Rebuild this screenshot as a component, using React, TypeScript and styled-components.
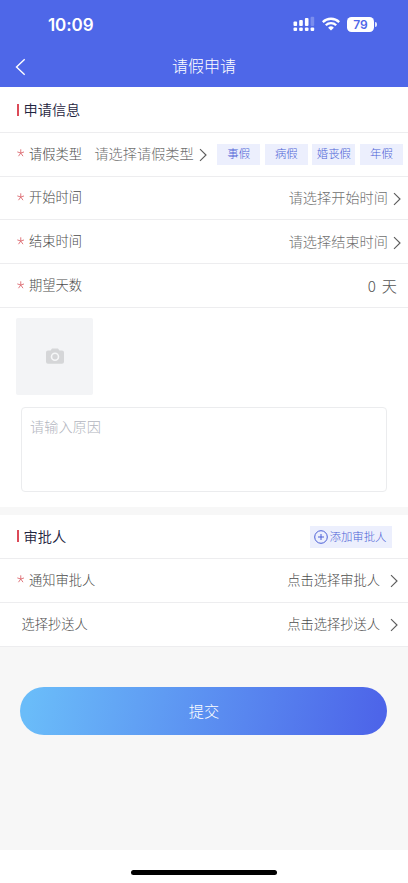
import React from "react";
import styled, { createGlobalStyle } from "styled-components";

const GlobalStyle = createGlobalStyle`
  * { box-sizing: border-box; }
  body {
    margin: 0;
    background: #fff;
    font-family: "Noto Sans CJK SC", "Noto Sans", sans-serif;
    font-weight: 300;
  }
`;

const Screen = styled.div`
  width: 408px;
  height: 883px;
  display: flex;
  flex-direction: column;
  background: #f7f7f7;
  overflow: hidden;
`;

const Header = styled.header`
  height: 87px;
  flex: none;
  background: #4e67e8;
  color: #fff;
`;

const StatusBar = styled.div`
  height: 48px;
  padding: 2px 31px 0 48px;
  display: flex;
  align-items: center;
  justify-content: space-between;
`;

const Clock = styled.span`
  font: 600 17px/20px Inter, sans-serif;
  letter-spacing: -0.1px;
`;

const StatusIcons = styled.div`
  display: flex;
  align-items: center;
  gap: 7px;
  margin-top: -2px;
`;

const NavBar = styled.div`
  height: 36px;
  display: grid;
  grid-template-columns: 60px 1fr 60px;
  align-items: center;
`;

const BackIcon = styled.svg`
  margin: 1px 0 0 15px;
`;

const NavTitle = styled.h1`
  margin: -2px 0 0;
  font-size: 16px;
  font-weight: 300;
  line-height: 24px;
  text-align: center;
`;

const Card = styled.section<{ $height: number; $top?: number }>`
  height: ${(p) => p.$height}px;
  margin-top: ${(p) => p.$top ?? 0}px;
  flex: none;
  background: #fff;
`;

const Row = styled.div<{ $height?: number; $right?: number; $left?: number }>`
  height: ${(p) => p.$height ?? 43.8}px;
  padding: 0 ${(p) => p.$right ?? 7}px 0 ${(p) => p.$left ?? 16}px;
  display: flex;
  align-items: center;
  border-bottom: 1px solid #ededef;
  white-space: nowrap;
`;

const SectionTitle = styled.h2<{ $lift?: number }>`
  margin: 0 auto ${(p) => p.$lift ?? 0}px 0;
  display: flex;
  align-items: center;
  gap: 5px;
  font-size: 14.2px;
  line-height: 20px;
  font-weight: 350;
  color: #1e2440;

  &::before {
    content: "";
    width: 2px;
    height: 12.5px;
    margin: 1px 0 0 0.5px;
    background: #dc4a58;
  }
`;

const StarIcon = styled.svg`
  flex: none;
  margin: 0 5px 2px 0.5px;
`;

const Label = styled.span`
  font-size: 13.25px;
  line-height: 20px;
  margin: 0 auto 1.4px 0;
  color: #4c4c4c;
`;

const Value = styled.span<{ $size?: number; $tone?: string; $gap?: number; $lift?: number }>`
  font-size: ${(p) => p.$size ?? 14.2}px;
  line-height: 20px;
  color: ${(p) => p.$tone ?? "#707070"};
  margin: 0 ${(p) => p.$gap ?? 5}px ${(p) => p.$lift ?? 2}px 0;
  word-spacing: 2.5px;
`;

const ArrowIcon = styled.svg`
  flex: none;
  margin-top: 2px;
`;

const Tags = styled.div`
  display: flex;
  gap: 4.6px;
  margin: 1px 0 0 10.5px;
`;

const Tag = styled.button`
  width: 43px;
  height: 21px;
  padding: 0 0 2px;
  border: 0;
  background: #eceffd;
  color: #4b5fd6;
  font: 300 11.4px/19px "Noto Sans CJK SC", sans-serif;
`;

const AddButton = styled.button`
  width: 82px;
  height: 22px;
  padding: 0 0 0 4px;
  border: 0;
  display: flex;
  align-items: center;
  gap: 1.5px;
  background: #eceffd;
  color: #4b5fd6;
  font: 300 11.4px/20px "Noto Sans CJK SC", sans-serif;
  white-space: nowrap;
`;

const AddText = styled.span`
  margin-bottom: 2px;
`;

const Upload = styled.div`
  width: 77px;
  height: 77px;
  margin: 10.5px 0 0 16px;
  border-radius: 2px;
  background: #f3f4f6;
  display: flex;
  align-items: center;
  justify-content: center;
`;

const Reason = styled.textarea`
  display: block;
  width: 366px;
  height: 85px;
  margin: 12px 0 0 21px;
  padding: 8px;
  border: 1px solid #ebecee;
  border-radius: 4px;
  resize: none;
  outline: none;
  font: 300 14.2px/20px "Noto Sans CJK SC", sans-serif;

  &::placeholder {
    color: #b2b5be;
    opacity: 1;
  }
`;

const Submit = styled.button`
  flex: none;
  width: 367px;
  height: 48px;
  margin: 40.4px 0 0 20.4px;
  padding: 0 0 3px;
  border: 0;
  border-radius: 24px;
  background: linear-gradient(100deg, #6abcf9 3%, #4d65e9 97%);
  color: #fff;
  font: 300 15.2px/22px "Noto Sans CJK SC", sans-serif;
`;

const HomeArea = styled.footer`
  height: 33px;
  margin-top: auto;
  flex: none;
  padding-top: 20px;
  background: #fff;
`;

const HomeBar = styled.div`
  width: 146px;
  height: 5px;
  margin: 0 auto;
  border-radius: 3px;
  background: #000;
`;

const Arrow = () => (
  <ArrowIcon width="8" height="14" viewBox="0 0 8 14" fill="none" stroke="#5c5c5c" strokeWidth="1.15">
    <path d="M1 1.2 7 7 1 12.8" />
  </ArrowIcon>
);

const Star = () => (
  <StarIcon width="7.5" height="8" viewBox="0 0 7.5 8" fill="none" stroke="#dd6a70" strokeWidth="0.9">
    <path d="M3.75 4V.3M3.75 4 .3 2.900M3.75 4l3.450-1.100M3.75 4 1.500 7.200M3.75 4 6 7.200" />
  </StarIcon>
);

const Signal = () => (
  <svg width="22" height="16" viewBox="0 0 22 16" fill="#fff">
    <rect x="0.5" y="5.5" width="3.6" height="4.5" rx="1" />
    <rect x="6.2" y="4" width="3.6" height="6" rx="1" />
    <rect x="11.9" y="2" width="3.6" height="8" rx="1" />
    <rect x="17.6" y="0.8" width="3.6" height="9.2" rx="1" opacity="0.25" />
    <rect x="0.5" y="11.5" width="3.6" height="3.6" rx="1.1" />
    <rect x="6.2" y="11.5" width="3.6" height="3.6" rx="1.1" />
    <rect x="11.9" y="11.5" width="3.6" height="3.6" rx="1.1" />
    <rect x="17.6" y="11.5" width="3.6" height="3.6" rx="1.1" />
  </svg>
);

const Wifi = () => (
  <svg width="18" height="14" viewBox="0 0 18 14" fill="none" stroke="#fff" strokeWidth="2.3">
    <path d="M.8 5.1a11.7 11.7 0 0 1 16.4 0" />
    <path d="M3.8 8.2a7.4 7.4 0 0 1 10.4 0" />
    <path d="M9 13.6 6.1 10.7a4.1 4.1 0 0 1 5.8 0z" fill="#fff" stroke="none" />
  </svg>
);

const Battery = styled.div`
  display: flex;
  align-items: center;
  gap: 1px;

  &::after {
    content: "";
    width: 2px;
    height: 5px;
    border-radius: 0 2px 2px 0;
    background: #dfe4fc;
  }
`;

const BatteryLevel = styled.span`
  width: 27px;
  height: 15px;
  border-radius: 4.5px;
  background: #fff;
  color: #4e67e8;
  font: 600 12px/15px Inter, sans-serif;
  text-align: center;
`;

const Camera = () => (
  <svg width="20" height="17" viewBox="0 0 20 17">
    <path
      d="M7 .5h6l1.400 2H17a2 2 0 0 1 2 2v9.300a2 2 0 0 1-2 2H3a2 2 0 0 1-2-2V4.500a2 2 0 0 1 2-2h2.600z"
      fill="#d5d6d8"
    />
    <circle cx="10" cy="8.800" r="3.500" fill="none" stroke="#f6f7f8" strokeWidth="1.600" />
  </svg>
);

const PlusCircle = () => (
  <svg width="14" height="14" viewBox="0 0 14 14" fill="none" stroke="#4b5fd6" strokeWidth="1">
    <circle cx="7" cy="7" r="6.300" />
    <path d="M7 4v6M4 7h6" />
  </svg>
);

const leaveTypes = ["事假", "病假", "婚丧假", "年假"];

export default function App() {
  return (
    <Screen>
      <GlobalStyle />
      <Header>
        <StatusBar>
          <Clock>10:09</Clock>
          <StatusIcons>
            <Signal />
            <Wifi />
            <Battery>
              <BatteryLevel>79</BatteryLevel>
            </Battery>
          </StatusIcons>
        </StatusBar>
        <NavBar>
          <BackIcon width="11" height="18" viewBox="0 0 11 18" fill="none" stroke="#fff" strokeWidth="1.4">
            <path d="M9.700 1.200 1.500 9l8.200 7.800" />
          </BackIcon>
          <NavTitle>请假申请</NavTitle>
        </NavBar>
      </Header>

      <Card $height={420}>
        <Row $height={45.8}>
          <SectionTitle>申请信息</SectionTitle>
        </Row>
        <Row $right={5}>
          <Star />
          <Label>请假类型</Label>
          <Value>请选择请假类型</Value>
          <Arrow />
          <Tags>
            {leaveTypes.map((name) => (
              <Tag key={name}>{name}</Tag>
            ))}
          </Tags>
        </Row>
        <Row>
          <Star />
          <Label>开始时间</Label>
          <Value>请选择开始时间</Value>
          <Arrow />
        </Row>
        <Row>
          <Star />
          <Label>结束时间</Label>
          <Value>请选择结束时间</Value>
          <Arrow />
        </Row>
        <Row $right={11}>
          <Star />
          <Label>期望天数</Label>
          <Value $size={15.2} $tone="#555" $gap={0} $lift={1}>0 天</Value>
        </Row>
        <Upload>
          <Camera />
        </Upload>
        <Reason placeholder="请输入原因" />
      </Card>

      <Card $height={132} $top={8}>
        <Row $height={44} $right={16}>
          <SectionTitle $lift={2}>审批人</SectionTitle>
          <AddButton>
            <PlusCircle />
            <AddText>添加审批人</AddText>
          </AddButton>
        </Row>
        <Row $right={10}>
          <Star />
          <Label>通知审批人</Label>
          <Value $size={13.25} $tone="#4c4c4c" $gap={10} $lift={0}>点击选择审批人</Value>
          <Arrow />
        </Row>
        <Row $left={21.5} $right={10}>
          <Label>选择抄送人</Label>
          <Value $size={13.25} $tone="#4c4c4c" $gap={10} $lift={0}>点击选择抄送人</Value>
          <Arrow />
        </Row>
      </Card>

      <Submit>提交</Submit>
      <HomeArea>
        <HomeBar />
      </HomeArea>
    </Screen>
  );
}
